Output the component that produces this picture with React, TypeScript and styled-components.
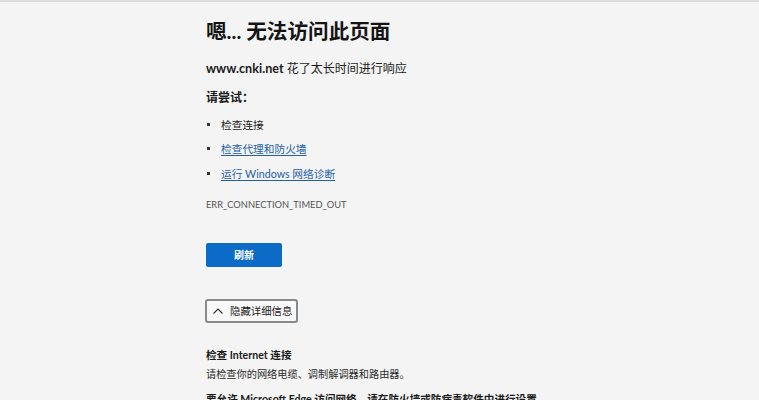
import React from "react";
import styled, { createGlobalStyle } from "styled-components";

const Global = createGlobalStyle`
  html, body { margin: 0; padding: 0; background: #f4f4f4; }
  body {
    font-family: "Lato", "Noto Sans CJK SC", sans-serif;
    color: #1b1b1b;
    overflow: hidden;
  }
`;

const Page = styled.div`
  min-height: 400px;
  border-top: 2px solid #dcdcdc;
  box-sizing: border-box;
`;

const Main = styled.main`
  width: 347px;
  margin: 0 auto;
  padding-top: 15px;
`;

const Title = styled.h1`
  margin: 0;
  font-size: 20.6px;
  font-weight: 700;
  line-height: 28px;
  color: #141414;
`;

const Lead = styled.p`
  margin: 15px 0 0;
  font-size: 12px;
  line-height: 18px;
  b { font-weight: 700; font-size: 12.6px; }
`;

const SubHead = styled.h2`
  margin: 11px 0 0;
  font-size: 12px;
  font-weight: 700;
  line-height: 18px;
`;

const List = styled.ul`
  list-style: none;
  margin: 5px 0 0;
  padding: 0;
`;

const Item = styled.li`
  display: flex;
  align-items: center;
  height: 24.5px;
  font-size: 10.7px;
  &::before {
    content: "";
    width: 3px;
    height: 3px;
    background: #333;
    margin: 0 11px 0 1px;
  }
`;

const Link = styled.a`
  color: #1e5fab;
  text-decoration: underline;
  text-underline-offset: 2px;
`;

const Code = styled.div`
  margin-top: 12px;
  font-size: 9.3px;
  line-height: 14px;
  color: #555;
`;

const Primary = styled.button`
  display: block;
  margin-top: 31px;
  width: 76px;
  height: 24px;
  border: none;
  border-radius: 2px;
  background: #0b6bc7;
  color: #fff;
  font-family: inherit;
  font-size: 10px;
  font-weight: 700;
  padding: 0;
`;

const Toggle = styled.button`
  display: flex;
  align-items: center;
  gap: 7px;
  margin: 32px 0 0 -1px;
  height: 24px;
  padding: 0 4px 0 6px;
  border: 2px solid #8a8a8a;
  border-radius: 3px;
  background: #f8f8f8;
  color: #222;
  font-family: inherit;
  font-size: 10.4px;
  box-sizing: border-box;
`;

const Section = styled.section`
  margin-top: 23.5px;
`;

const SecHead = styled.h3`
  margin: 0;
  font-size: 10.6px;
  font-weight: 700;
  line-height: 19px;
`;

const SecText = styled.p`
  margin: 0;
  font-size: 10.2px;
  line-height: 19px;
  color: #2a2a2a;
`;

const Gap = styled.div`
  height: 6px;
`;

export default function App() {
  return (
    <Page>
      <Global />
      <Main>
        <Title>嗯... 无法访问此页面</Title>
        <Lead>
          <b>www.cnki.net</b> 花了太长时间进行响应
        </Lead>
        <SubHead>请尝试：</SubHead>
        <List>
          <Item>检查连接</Item>
          <Item>
            <Link href="#">检查代理和防火墙</Link>
          </Item>
          <Item>
            <Link href="#">运行 Windows 网络诊断</Link>
          </Item>
        </List>
        <Code>ERR_CONNECTION_TIMED_OUT</Code>
        <Primary>刷新</Primary>
        <Toggle>
          <svg width="10" height="6" viewBox="0 0 10 6" fill="none">
            <path d="M0.5 5.5 L5 1 L9.5 5.5" stroke="#333" strokeWidth="1.1" />
          </svg>
          隐藏详细信息
        </Toggle>
        <Section>
          <SecHead>检查 Internet 连接</SecHead>
          <SecText>请检查你的网络电缆、调制解调器和路由器。</SecText>
          <Gap />
          <SecHead>要允许 Microsoft Edge 访问网络，请在防火墙或防病毒软件中进行设置。</SecHead>
        </Section>
      </Main>
    </Page>
  );
}
